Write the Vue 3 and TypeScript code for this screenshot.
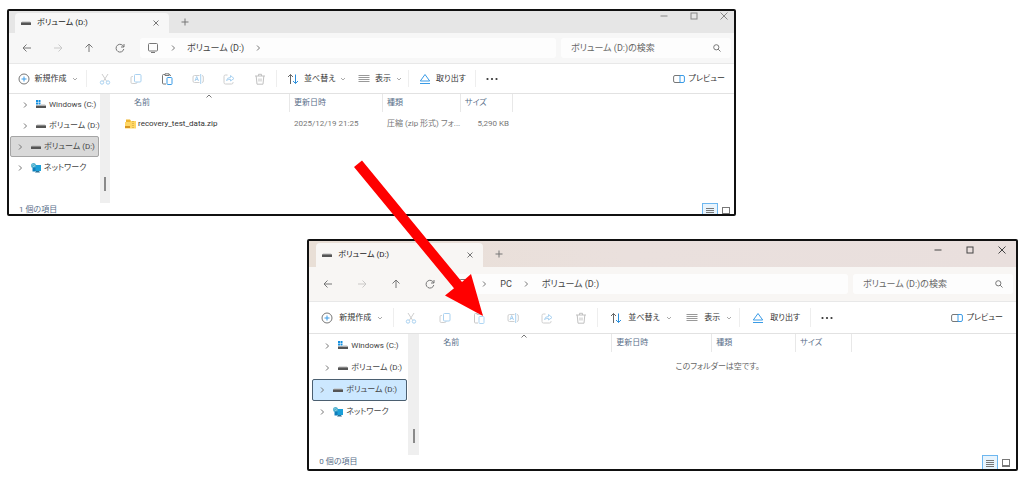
<script setup lang="ts">
interface TreeItem {
  label: string
  icon: 'windows' | 'drive' | 'network'
  root: boolean
  selected: boolean
}
interface FileRow {
  name: string
  date: string
  kind: string
  size: string
}
interface ExplorerWindow {
  id: string
  path: string[]
  trailing: boolean
  canPaste: boolean
  files: FileRow[]
  status: string
}

const tree: TreeItem[] = [
  { label: 'Windows (C:)', icon: 'windows', root: false, selected: false },
  { label: 'ボリューム (D:)', icon: 'drive', root: false, selected: false },
  { label: 'ボリューム (D:)', icon: 'drive', root: true, selected: true },
  { label: 'ネットワーク', icon: 'network', root: true, selected: false },
]

const windows: ExplorerWindow[] = [
  {
    id: 'before',
    path: ['ボリューム (D:)'],
    trailing: true,
    canPaste: true,
    files: [
      { name: 'recovery_test_data.zip', date: '2025/12/19 21:25', kind: '圧縮 (zip 形式) フォ...', size: '5,290 KB' },
    ],
    status: '1 個の項目',
  },
  {
    id: 'after',
    path: ['PC', 'ボリューム (D:)'],
    trailing: false,
    canPaste: false,
    files: [],
    status: '0 個の項目',
  },
]
</script>

<template>
  <main class="page">
    <section v-for="w in windows" :key="w.id" class="window" :class="w.id">
      <header class="titlebar">
        <div class="tab">
          <svg class="drive" viewBox="0 0 10 10"><path d="M1 3.500h8l1 1.500H0z" fill="#bbb" /><rect y="4.500" width="10" height="2.500" fill="#555" /></svg>
          <span class="tab-title">ボリューム (D:)</span>
          <button class="tab-close" aria-label="タブを閉じる"><svg viewBox="0 0 8 8"><path d="M1.500 1.500l5 5M6.500 1.500l-5 5" /></svg></button>
        </div>
        <button class="new-tab" aria-label="新しいタブ"><svg viewBox="0 0 8 8"><path d="M4 .5v7M.5 4h7" /></svg></button>
        <div class="controls">
          <button aria-label="最小化"><svg viewBox="0 0 8 8"><path d="M.5 4h7" /></svg></button>
          <button aria-label="最大化"><svg viewBox="0 0 8 8"><rect x="1" y="1" width="6" height="6" /></svg></button>
          <button aria-label="閉じる"><svg viewBox="0 0 8 8"><path d="M.5.5l7 7M7.500.5l-7 7" /></svg></button>
        </div>
      </header>

      <nav class="navbar">
        <button class="nav-btn" aria-label="戻る"><svg viewBox="0 0 10 10"><path d="M9 5H1.200M4.500 1.500L1 5l3.500 3.500" /></svg></button>
        <button class="nav-btn" aria-label="進む" disabled><svg viewBox="0 0 10 10"><path d="M1 5h7.800M5.500 1.500L9 5 5.500 8.500" /></svg></button>
        <button class="nav-btn" aria-label="上へ"><svg viewBox="0 0 10 10"><path d="M5 9V1.200M1.500 4.500L5 1l3.500 3.500" /></svg></button>
        <button class="nav-btn" aria-label="更新"><svg viewBox="0 0 10 10"><path d="M8.700 4A3.900 3.900 0 1 0 8.800 6M9 1v3H6" /></svg></button>
        <div class="address">
          <svg class="pc" viewBox="0 0 12 12"><rect x="1.500" y="1.500" width="9" height="7.500" rx="1" /><path d="M4 10.500h4" /></svg>
          <template v-for="(part, i) in w.path" :key="i">
            <svg class="crumb" viewBox="0 0 8 8"><path d="M3 1.500L5.500 4 3 6.500" /></svg>
            <a href="#">{{ part }}</a>
          </template>
          <svg v-if="w.trailing" class="crumb" viewBox="0 0 8 8"><path d="M3 1.500L5.500 4 3 6.500" /></svg>
        </div>
        <label class="search">
          <input type="text" placeholder="ボリューム (D:)の検索" aria-label="ボリューム (D:)の検索" />
          <svg viewBox="0 0 8 8"><circle cx="3.300" cy="3.300" r="2.600" /><path d="M5.200 5.200L7.500 7.500" /></svg>
        </label>
      </nav>

      <div class="toolbar">
        <div class="group new">
          <button class="cmd">
            <svg class="ico" viewBox="0 0 12 12"><circle cx="6" cy="6" r="5" stroke="#777" /><path d="M6 3.500v5M3.500 6h5" stroke="#3a9be6" /></svg>
            <span>新規作成</span>
            <svg class="down" viewBox="0 0 6 6"><path d="M1 2l2 2 2-2" /></svg>
          </button>
        </div>
        <div class="group icons">
          <button class="icon-cmd dim" aria-label="切り取り"><svg class="ico" viewBox="0 0 12 12"><path d="M3 1l4.800 7.500M9 1L4.200 8.500" stroke="#888" /><circle cx="3" cy="9.500" r="1.700" stroke="#2b8fdc" /><circle cx="9" cy="9.500" r="1.700" stroke="#2b8fdc" /></svg></button>
          <button class="icon-cmd dim" aria-label="コピー"><svg class="ico" viewBox="0 0 12 12"><path d="M3 3.500H2.200Q1 3.500 1 4.700v4.600q0 1.200 1.200 1.200h3.600Q7 10.500 7 9.300V9" stroke="#888" /><rect x="4.500" y="1.500" width="6.500" height="7.500" rx="1" stroke="#2b8fdc" /></svg></button>
          <button class="icon-cmd" :class="{ dim: !w.canPaste }" aria-label="貼り付け"><svg class="ico" viewBox="0 0 12 12"><path d="M4 1.500H2.500Q1.500 1.500 1.500 2.500v7.500q0 1 1 1H5M8 1.500q1.500 0 1.500 1.500M4 .8h4v1.700H4z" stroke="#777" /><rect x="6" y="4.500" width="5" height="7" rx=".8" stroke="#3a9be6" /></svg></button>
          <button class="icon-cmd dim" aria-label="名前の変更"><svg class="ico" viewBox="0 0 12 12"><path d="M7.500 2.500h-5Q1 2.500 1 4v4q0 1.500 1.500 1.500h5M10 2.500q1.300 0 1.300 1.500v4q0 1.500-1.300 1.500" stroke="#888" /><path d="M8.700 1v10M3 8l1.700-4.500L6.500 8M3.600 6.500h2.300" stroke="#2b8fdc" /></svg></button>
          <button class="icon-cmd dim" aria-label="共有"><svg class="ico" viewBox="0 0 12 12"><path d="M4.500 2H2.500Q1 2 1 3.500v6Q1 11 2.500 11h6Q10 11 10 9.500V9" stroke="#888" /><path d="M3.500 7.500q.5-3 4-3V2.500L11 5.500 7.500 8V6.300q-2.500 0-4 1.200z" stroke="#2b8fdc" /></svg></button>
          <button class="icon-cmd dim" aria-label="削除"><svg class="ico" viewBox="0 0 12 12"><path d="M1 3h10M4.500 3V1.300h3V3M2.200 3l.8 8.200h6L9.800 3M5 5.500v3M7 5.500v3" stroke="#666" /></svg></button>
        </div>
        <div class="group sort-view">
          <button class="cmd sort">
            <svg class="ico" viewBox="0 0 12 12"><path d="M3.500 11V1.500M1 4l2.500-2.500L6 4" stroke="#666" /><path d="M8.500 1.500v9M6 8l2.500 2.500L11 8" stroke="#2b8fdc" /></svg>
            <span>並べ替え</span>
            <svg class="down" viewBox="0 0 6 6"><path d="M1 2l2 2 2-2" /></svg>
          </button>
          <button class="cmd view">
            <svg class="ico" viewBox="0 0 12 12"><path d="M.5 2.500h11M.5 4.500h11M.5 6.500h11M.5 8.500h11" stroke="#999" /></svg>
            <span>表示</span>
            <svg class="down" viewBox="0 0 6 6"><path d="M1 2l2 2 2-2" /></svg>
          </button>
        </div>
        <div class="group eject">
          <button class="cmd">
            <svg class="ico" viewBox="0 0 12 12"><path d="M6 1.500L10.700 8H1.300zM1 10.500h10" stroke="#3a9be6" /></svg>
            <span>取り出す</span>
          </button>
        </div>
        <button class="more" aria-label="もっと見る"><svg class="ico" viewBox="0 0 12 12"><circle cx="1.500" cy="6" r="1.100" /><circle cx="6" cy="6" r="1.100" /><circle cx="10.500" cy="6" r="1.100" /></svg></button>
        <button class="preview">
          <svg class="ico" viewBox="0 0 12 12"><path d="M7 2.500H2Q.6 2.500.6 4v4Q.6 9.500 2 9.500h5" stroke="#777" /><path d="M7 2.500h3q1.400 0 1.400 1.500v4q0 1.500-1.400 1.500H7z" stroke="#3a9be6" /></svg>
          <span>プレビュー</span>
        </button>
      </div>

      <div class="body">
        <ul class="tree">
          <li v-for="(t, i) in tree" :key="i">
            <button class="node" :class="{ root: t.root, selected: t.selected }">
              <svg class="crumb" viewBox="0 0 8 8"><path d="M3 1.500L5.500 4 3 6.500" /></svg>
              <svg v-if="t.icon === 'windows'" class="drive" viewBox="0 0 10 10"><path d="M0 0h2v2H0zM2.500 0h2v2h-2zM0 2.500h2v2H0zM2.500 2.500h2v2h-2z" fill="#1590e0" /><path d="M0 5.500h10v2.500H0z" fill="#555" /><path d="M5 4.500h4l1 1H5z" fill="#bbb" /></svg>
              <svg v-else-if="t.icon === 'drive'" class="drive" viewBox="0 0 10 10"><path d="M1 3.500h8l1 1.500H0z" fill="#bbb" /><rect y="4.500" width="10" height="2.500" fill="#555" /></svg>
              <svg v-else class="drive network" viewBox="0 0 10 10"><path d="M2.500 2H10v6H2.500z" fill="#1a9fd8" /><path d="M5 8h3l1 1.500H4z" fill="#2a6f94" /><circle cx="2.500" cy="2.500" r="2.500" fill="#4fb0cf" /><path d="M1 2.500l1.500-1.500M2 4l2-1.500" stroke="#a5dbe8" stroke-width=".8" /><path d="M1.500 4.500h3v4h-3z" fill="#0d7dbb" /></svg>
              <span>{{ t.label }}</span>
            </button>
          </li>
        </ul>
        <div class="gutter"><i class="thumb"></i></div>
        <div class="list">
          <table>
            <colgroup><col class="c-name" /><col class="c-date" /><col class="c-kind" /><col class="c-size" /><col /></colgroup>
            <thead>
              <tr>
                <th class="name-head">名前<svg class="caret" viewBox="0 0 8 4"><path d="M1.500 3.500L4 1l2.500 2.500" /></svg></th>
                <th>更新日時</th>
                <th>種類</th>
                <th>サイズ</th>
                <td></td>
              </tr>
            </thead>
            <tbody>
              <tr v-for="f in w.files" :key="f.name">
                <td class="file-name">
                  <div class="file">
                    <svg class="zip" viewBox="0 0 12 12"><path d="M1 1.500h4l1 1.500h5v7H1z" fill="#efb52e" /><path d="M0 4h5l1-1h5v7.500H0z" fill="#ffd765" /><path d="M0 8h5v2H0z" fill="#d99621" /><path d="M8 3v7" stroke="#c79a32" stroke-dasharray="1 1" /></svg>
                    <span>{{ f.name }}</span>
                  </div>
                </td>
                <td>{{ f.date }}</td>
                <td class="kind">{{ f.kind }}</td>
                <td class="size">{{ f.size }}</td>
                <td></td>
              </tr>
            </tbody>
          </table>
          <p v-if="!w.files.length" class="empty">このフォルダーは空です。</p>
        </div>
      </div>

      <footer class="status">
        <span>{{ w.status }}</span>
        <button class="mode on" aria-label="詳細"><svg viewBox="0 0 10 10"><path d="M1 2.500h8M1 4.500h8M1 6.500h8M1 8.500h8" /></svg></button>
        <button class="mode" aria-label="大アイコン"><svg viewBox="0 0 10 10"><rect x="1.500" y="1.500" width="7" height="6" /><path d="M1 8.500h8" /></svg></button>
      </footer>
    </section>

    <svg class="arrow" viewBox="350 158 138 162" aria-hidden="true">
      <path d="M354 167l8-6.500 100 121.500 9-8 12 42-38-20.500 9-7.300z" fill="#f00" />
    </svg>
  </main>
</template>

<style>
body {
  margin: 0;
  background: #fff;
}
</style>

<style scoped>
.page {
  position: relative;
  padding: 9px 6px 16px 7px;
  font-family: Roboto, "Noto Sans CJK JP", sans-serif;
  font-feature-settings: "palt";
  color: #444;
}
.window {
  box-sizing: border-box;
  border: 2px solid #111;
  border-radius: 2px;
  background: #fff;
  overflow: hidden;
  font-size: 8px;
  line-height: 12px;
}
.before {
  --bar: #e6e6e6;
  --chrome: #f7f7f7;
  --tab-h: 22px;
  --tab-w: 154px;
  --tab-x: 6px;
  --nav-h: 30px;
  --nav-step: 31px;
  --addr-x: 5px;
  --crumb-gap: 10px;
  --search-w: 170px;
  --tool-h: 29px;
  --new-w: 78px;
  --icon-step: 31px;
  --icons-w: 190px;
  --sort-w: 71px;
  --sv-w: 132px;
  --eject-w: 67px;
  --cmd-pad: 10px;
  --gap: 5px;
  --preview-pad: 9px;
  --side-w: 91px;
  --gutter-w: 10px;
  --tree-pad: 0;
  --row-h: 21px;
  --body-h: 109px;
  --thumb-b: 12px;
  --c-name: 180px;
  --c-date: 93px;
  --c-kind: 78px;
  --c-size: 52px;
  --sel-bg: #d9d9d9;
  --sel-bd: #a5a5a5;
  --status-h: 11px;
  --status-pad: 0;
  --ctl: #888;
  --ctl-w: 30px;
  --ctl-h: 10px;
  --close-w: 20px;
  --close-x: 5px;
  width: 72.100%;
}
.after {
  --bar: linear-gradient(90deg, #e9dfd6, #eae0dd 45%, #e9dfdd);
  --chrome: #f8f6f4;
  --tab-h: 26px;
  --tab-w: 167px;
  --tab-x: 7px;
  --nav-h: 34px;
  --nav-step: 34px;
  --addr-x: 4px;
  --crumb-gap: 12px;
  --search-w: 160px;
  --tool-h: 31px;
  --new-w: 85px;
  --icon-step: 34px;
  --icons-w: 204px;
  --sort-w: 76px;
  --sv-w: 142px;
  --eject-w: 71px;
  --cmd-pad: 12px;
  --gap: 6px;
  --preview-pad: 13px;
  --side-w: 99px;
  --gutter-w: 11px;
  --tree-pad: 1px;
  --row-h: 22px;
  --body-h: 121px;
  --thumb-b: 12px;
  --c-name: 193px;
  --c-date: 100px;
  --c-kind: 84px;
  --c-size: 56px;
  --sel-bg: #cce8ff;
  --sel-bd: #4b5f70;
  --status-h: 14px;
  --status-pad: 2px;
  --ctl: #444;
  --ctl-w: 32px;
  --ctl-h: 18px;
  --close-w: 28px;
  --close-x: 2px;
  width: 70.300%;
  margin: 23px 0 0 auto;
}
button,
input {
  margin: 0;
  padding: 0;
  border: 0;
  background: none;
  font: inherit;
  font-feature-settings: inherit;
  color: inherit;
}
button {
  display: flex;
  align-items: center;
  flex: none;
  white-space: nowrap;
}
svg {
  display: block;
  flex: none;
  fill: none;
  stroke: #777;
  stroke-width: 1;
}
.drive,
.zip,
.arrow {
  stroke: none;
}
.drive {
  width: 10px;
  height: 10px;
}
.titlebar {
  display: flex;
  height: var(--tab-h);
  background: var(--bar);
}
.tab {
  box-sizing: border-box;
  display: flex;
  align-items: center;
  width: var(--tab-w);
  margin: 2px 0 0 var(--tab-x);
  padding: 0 9px 0 6px;
  border-radius: 4px 4px 0 0;
  background: var(--chrome);
}
.tab-title {
  margin-left: 6px;
  color: #222;
}
.tab-close {
  margin-left: auto;
}
.tab-close svg,
.new-tab svg,
.controls svg {
  width: 8px;
  height: 8px;
}
.new-tab {
  padding: 0 12px;
}
.controls {
  display: flex;
  height: var(--ctl-h);
  margin-left: auto;
}
.controls button {
  width: var(--ctl-w);
  justify-content: center;
}
.controls svg {
  stroke: var(--ctl);
}
.controls button:last-child {
  width: var(--close-w);
  margin-left: var(--close-x);
}
.navbar {
  box-sizing: border-box;
  display: flex;
  align-items: center;
  height: var(--nav-h);
  padding: 0 3px 0 2px;
  background: var(--chrome);
  font-size: 9px;
}
.nav-btn {
  width: var(--nav-step);
  justify-content: center;
}
.nav-btn svg {
  width: 10px;
  height: 10px;
}
.nav-btn:disabled {
  opacity: 0.35;
}
.address,
.search {
  box-sizing: border-box;
  display: flex;
  align-items: center;
  height: 20px;
  border-radius: 3px;
  background: #fdfdfd;
}
.address {
  flex: 1;
  margin-left: var(--addr-x);
  padding-left: 7px;
}
.pc {
  width: 12px;
  height: 12px;
}
.crumb {
  width: 8px;
  height: 8px;
}
.address .crumb {
  margin: 0 var(--crumb-gap) 0 10px;
}
.address a {
  color: inherit;
  text-decoration: none;
}
.search {
  width: var(--search-w);
  margin-left: 5px;
  padding: 0 10px;
}
.search input {
  flex: 1;
  min-width: 0;
  outline: 0;
}
.search input::placeholder {
  color: #666;
  opacity: 1;
}
.search svg {
  width: 8px;
  height: 8px;
}
.toolbar {
  display: flex;
  height: var(--tool-h);
  border-top: 1px solid #e8e8e8;
  border-bottom: 1px solid #e2e2e2;
  color: #333;
}
.group {
  box-sizing: border-box;
  display: flex;
  justify-content: center;
  position: relative;
  flex: none;
}
.group::after {
  content: "";
  position: absolute;
  right: 0;
  top: 6px;
  bottom: 6px;
  width: 1px;
  background: #eee;
}
.ico {
  width: 12px;
  height: 12px;
}
.new {
  width: var(--new-w);
}
.icons {
  width: var(--icons-w);
}
.sort-view {
  width: var(--sv-w);
  justify-content: flex-start;
}
.eject {
  width: var(--eject-w);
}
.cmd {
  box-sizing: border-box;
  gap: var(--gap);
  flex: 1;
  padding-left: var(--cmd-pad);
}
.cmd.sort {
  flex: none;
  width: var(--sort-w);
}
.down {
  width: 6px;
  height: 6px;
  stroke: #aaa;
  margin: 0 7px 0 auto;
}
.new .down,
.view .down {
  margin-right: 11px;
}
.icon-cmd {
  width: var(--icon-step);
  justify-content: center;
}
.dim {
  opacity: 0.4;
}
.more {
  width: 32px;
  justify-content: center;
}
.more svg {
  fill: #333;
  stroke: none;
}
.preview {
  gap: 4px;
  margin-left: auto;
  padding-right: var(--preview-pad);
}
.body {
  display: flex;
  min-height: var(--body-h);
}
.tree {
  flex: none;
  width: var(--side-w);
  margin: 0;
  padding: var(--tree-pad) 0 0;
  list-style: none;
}
.node {
  box-sizing: border-box;
  width: calc(100% - 2px);
  height: var(--row-h);
  margin-left: 1px;
  padding-left: 10px;
  border: 1px solid transparent;
}
.node.root {
  padding-left: 5px;
}
.node.selected {
  border-color: var(--sel-bd);
  border-radius: 2px;
  background: var(--sel-bg);
}
.node .drive {
  margin: 0 3px 0 7px;
}
.after .node {
  margin-left: 3px;
  width: calc(100% - 4px);
}
.gutter {
  display: flex;
  align-items: flex-end;
  justify-content: center;
  flex: none;
  width: var(--gutter-w);
  background: #efefef;
}
.thumb {
  width: 2px;
  height: 14px;
  margin-bottom: var(--thumb-b);
  background: #8a8a8a;
}
.list {
  flex: 1;
  min-width: 0;
}
table {
  width: 100%;
  table-layout: fixed;
  border-collapse: separate;
  border-spacing: 0;
}
.c-name {
  width: var(--c-name);
}
.c-date {
  width: var(--c-date);
}
.c-kind {
  width: var(--c-kind);
}
.c-size {
  width: var(--c-size);
}
th {
  position: relative;
  height: 18px;
  padding: 0 0 0 4px;
  border-right: 1px solid #e8e8e8;
  box-sizing: border-box;
  font-weight: 400;
  text-align: left;
  color: #5a6f8a;
}
th.name-head {
  padding-left: 24px;
}
.caret {
  position: absolute;
  left: calc(50% + 5px);
  top: 0;
  width: 8px;
  height: 4px;
}
tbody td {
  height: 23px;
  padding: 0 4px;
  color: #777;
  white-space: nowrap;
}
td.file-name {
  padding-left: 15px;
}
.file {
  display: flex;
  align-items: center;
  gap: 1px;
  color: #333;
}
.zip {
  width: 12px;
  height: 12px;
}
td.kind {
  padding-right: 0;
}
td.size {
  text-align: right;
}
.empty {
  margin: 9px 0 0;
  text-align: center;
  color: #666;
}
.status {
  display: flex;
  align-items: flex-start;
  height: var(--status-h);
  padding: 0 var(--status-pad) 0 10px;
  color: #5a6f8a;
}
.status span {
  flex: 1;
  padding-top: 1px;
}
.mode {
  box-sizing: border-box;
  width: 16px;
  height: 16px;
  justify-content: center;
}
.mode.on {
  border: 1px solid #6db7f0;
  background: #e8f4fd;
}
.mode svg {
  width: 10px;
  height: 10px;
}
.arrow {
  position: absolute;
  left: 350px;
  top: 158px;
  width: 138px;
  height: 162px;
}
</style>
